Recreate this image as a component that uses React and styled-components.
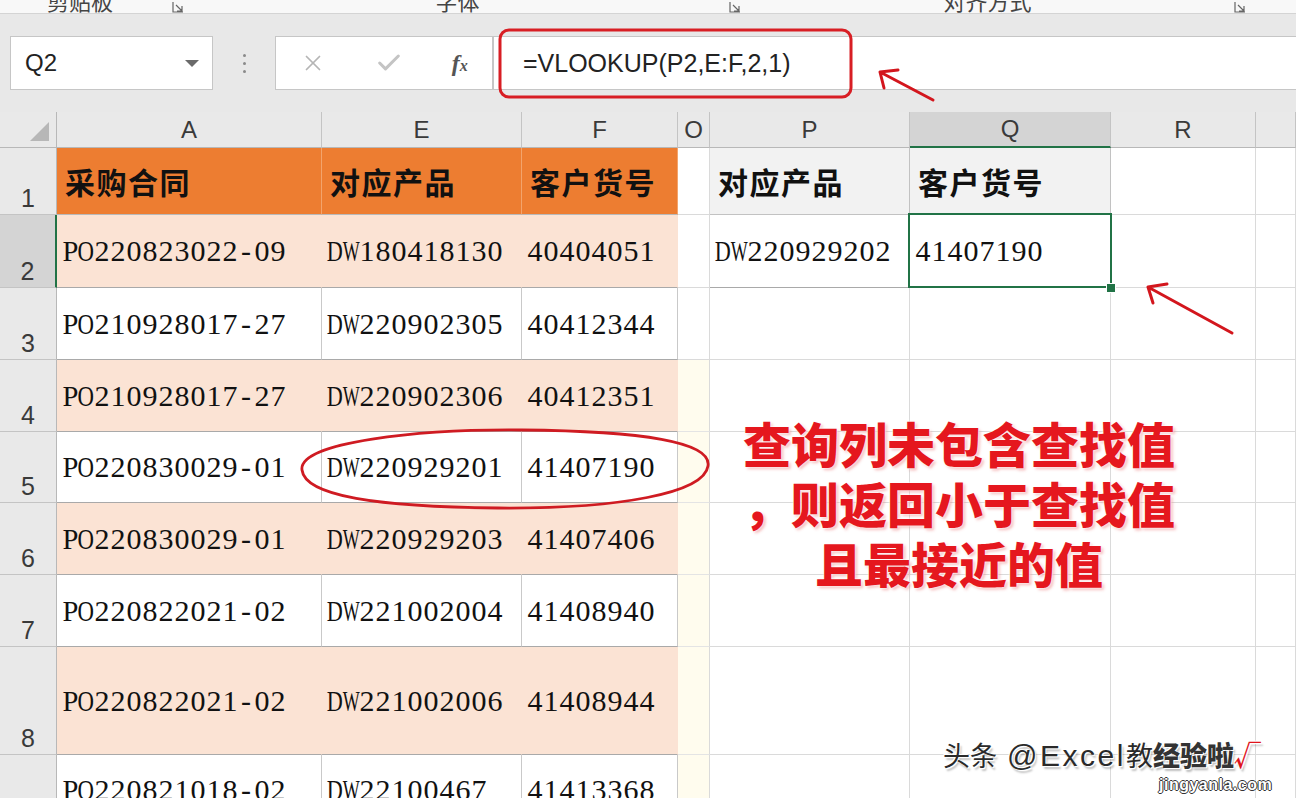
import React from "react";
import styled, { createGlobalStyle } from "styled-components";
import { X, Check } from "lucide-react";

const GlobalStyle = createGlobalStyle`
  html, body { margin: 0; padding: 0; background: #fff; }
  body { font-family: "Liberation Sans", "Noto Sans CJK SC", sans-serif; }
  * { box-sizing: border-box; }
`;

const rows = [
  { n: 2, h: 73, fill: "peach", a: "PO220823022-09", e: "DW180418130", f: "40404051", p: "DW220929202", q: "41407190" },
  { n: 3, h: 72, fill: "white", a: "PO210928017-27", e: "DW220902305", f: "40412344" },
  { n: 4, h: 72, fill: "peach", a: "PO210928017-27", e: "DW220902306", f: "40412351" },
  { n: 5, h: 71, fill: "white", a: "PO220830029-01", e: "DW220929201", f: "41407190" },
  { n: 6, h: 72, fill: "peach", a: "PO220830029-01", e: "DW220929203", f: "41407406" },
  { n: 7, h: 72, fill: "white", a: "PO220822021-02", e: "DW221002004", f: "41408940" },
  { n: 8, h: 108, fill: "peach", a: "PO220822021-02", e: "DW221002006", f: "41408944" },
  { n: 9, h: 70, fill: "white", a: "PO220821018-02", e: "DW22100467", f: "41413368" },
];

const fills = {
  orange: { bg: "#ed7d31", v: "#f3a46c", h: "#b9b9b9" },
  peach: { bg: "#fbe3d4", v: "#fbe3d4", h: "#a9a9a9" },
  white: { bg: "#ffffff", v: "#c9c9c9", h: "#a9a9a9" },
  gray: { bg: "#f2f2f2", v: "#c2c2c2", h: "#c2c2c2" },
  plain: { bg: "#ffffff", v: "#dadada", h: "#dadada" },
  tint: { bg: "#fffcee", v: "#dadada", h: "#e4e4e4" },
};

// wide serif letters squeezed into the half-width cell of the sheet font
const squeeze = { D: 0.74, W: 0.6, O: 0.76, P: 0.95 };

const Value = ({ children }) => (
  <ValueRow>
    {[...children].map((ch, i) => (
      <Glyph key={i} $sx={squeeze[ch]}>
        <span>{ch}</span>
      </Glyph>
    ))}
  </ValueRow>
);

export default function App() {
  return (
    <Page>
      <GlobalStyle />
      <Ribbon>
        <RibbonSlot $w={160}><RibbonLabel>剪贴板</RibbonLabel></RibbonSlot>
        <RibbonSlot $w={35}><Launcher /></RibbonSlot>
        <RibbonSlot $w={525}><RibbonLabel>字体</RibbonLabel></RibbonSlot>
        <RibbonSlot $w={30}><Launcher /></RibbonSlot>
        <RibbonSlot $w={475}><RibbonLabel>对齐方式</RibbonLabel></RibbonSlot>
        <RibbonSlot $w={30}><Launcher /></RibbonSlot>
      </Ribbon>

      <FormulaBar>
        <NameBox>
          <span>Q2</span>
          <DropArrow />
        </NameBox>
        <Grip>
          <i /><i /><i />
        </Grip>
        <FxBox>
          <X size={26} strokeWidth={1.6} color="#b5b5b5" />
          <Check size={28} strokeWidth={2.6} color="#c4c4c4" />
          <FxMark>f<small>x</small></FxMark>
        </FxBox>
        <FormulaInput>=VLOOKUP(P2,E:F,2,1)</FormulaInput>
      </FormulaBar>

      <Sheet>
        <Corner><CornerTri /></Corner>
        <ColHead>A</ColHead>
        <ColHead>E</ColHead>
        <ColHead>F</ColHead>
        <ColHead>O</ColHead>
        <ColHead>P</ColHead>
        <ColHead $sel>Q</ColHead>
        <ColHead>R</ColHead>
        <ColHead />

        <RowHead>1</RowHead>
        <Cell $fill="orange"><HeadText>采购合同</HeadText></Cell>
        <Cell $fill="orange"><HeadText>对应产品</HeadText></Cell>
        <Cell $fill="orange"><HeadText>客户货号</HeadText></Cell>
        <Cell $fill="plain" />
        <Cell $fill="gray"><HeadText>对应产品</HeadText></Cell>
        <Cell $fill="gray"><HeadText>客户货号</HeadText></Cell>
        <Cell $fill="plain" />
        <Cell $fill="plain" />

        {rows.map((r) => (
          <React.Fragment key={r.n}>
            <RowHead $sel={r.n === 2}>{r.n < 9 ? r.n : ""}</RowHead>
            <Cell $fill={r.fill}><Value>{r.a}</Value></Cell>
            <Cell $fill={r.fill}><Value>{r.e}</Value></Cell>
            <Cell $fill={r.fill}><Value>{r.f}</Value></Cell>
            <Cell $fill={r.n >= 4 ? "tint" : "plain"} />
            <Cell $fill={r.n === 2 ? "white" : "plain"}>{r.p && <Value>{r.p}</Value>}</Cell>
            <Cell $fill="plain" $selected={r.n === 2}>
              {r.q && <Value>{r.q}</Value>}
              {r.n === 2 && <FillHandle />}
            </Cell>
            <Cell $fill="plain" />
            <Cell $fill="plain" />
          </React.Fragment>
        ))}
      </Sheet>

      <Marks viewBox="0 0 1296 798" width="1296" height="798">
        <rect x="500" y="30" width="351" height="67" rx="9" fill="none" stroke="#d81e24" strokeWidth="3" />
        <g stroke="#d3161d" strokeWidth="3" strokeLinecap="round" fill="none">
          <path d="M933 100 L880 72 M880 72 L898 70 M880 72 L884 88" />
          <path d="M1232 333 L1148 287 M1148 287 L1167 284 M1148 287 L1153 303" />
        </g>
        <path
          d="M302 470 C 298 442, 420 429, 522 430 C 642 431, 712 442, 708 466 C 704 493, 620 509, 498 508 C 378 507, 305 496, 302 470 Z"
          fill="none"
          stroke="#cf1b22"
          strokeWidth="2.8"
        />
      </Marks>

      <Note>
        查询列未包含查找值
        <br />
        ，则返回小于查找值
        <br />
        且最接近的值
      </Note>

      <Watermark>
        头条 <Handle>@Excel</Handle>教<Brand>经验啦</Brand><Tick>√</Tick>
        <Site>jingyanla.com</Site>
      </Watermark>
    </Page>
  );
}

const Launcher = () => (
  <svg width="12" height="12" viewBox="0 0 12 12">
    <path d="M1 1 V11 H11 M4 4 L10 10 M10 5 V10 H5" stroke="#666" strokeWidth="1.2" fill="none" />
  </svg>
);

const Page = styled.div`
  position: relative;
  width: 1296px;
  height: 798px;
  overflow: hidden;
  display: flex;
  flex-direction: column;
  background: #fff;
`;

const Ribbon = styled.div`
  height: 14px;
  flex: none;
  display: flex;
  align-items: flex-end;
  overflow: hidden;
  background: #f8f8f8;
  border-bottom: 1px solid #d4d4d4;
`;

const RibbonSlot = styled.div`
  width: ${(p) => p.$w}px;
  flex: none;
  display: flex;
  justify-content: center;
  align-items: flex-end;
  height: 14px;
`;

const RibbonLabel = styled.span`
  font-family: "Noto Sans CJK SC", sans-serif;
  font-size: 22px;
  line-height: 24px;
  color: #444;
  margin-bottom: 1px;
  flex: none;
`;

const FormulaBar = styled.div`
  height: 98px;
  flex: none;
  display: flex;
  align-items: center;
  padding-left: 10px;
  background: #e8e8e8;
`;

const NameBox = styled.div`
  width: 203px;
  height: 54px;
  display: flex;
  align-items: center;
  justify-content: space-between;
  padding: 0 13px 0 14px;
  background: #fff;
  border: 1px solid #c6c6c6;
  font-size: 24px;
  color: #222;
`;

const DropArrow = styled.span`
  width: 0;
  height: 0;
  border-left: 7px solid transparent;
  border-right: 7px solid transparent;
  border-top: 7px solid #6a6a6a;
`;

const Grip = styled.div`
  width: 62px;
  display: flex;
  flex-direction: column;
  align-items: center;
  gap: 5px;
  i {
    width: 3px;
    height: 3px;
    border-radius: 50%;
    background: #8a8a8a;
  }
`;

const FxBox = styled.div`
  width: 218px;
  height: 54px;
  display: flex;
  align-items: center;
  justify-content: space-around;
  background: #fff;
  border: 1px solid #c6c6c6;
`;

const FxMark = styled.span`
  font-family: "Liberation Serif", serif;
  font-style: italic;
  font-weight: bold;
  font-size: 24px;
  color: #555;
  small {
    font-size: 16px;
  }
`;

const FormulaInput = styled.div`
  flex: 1;
  height: 54px;
  display: flex;
  align-items: center;
  padding-left: 29px;
  background: #fff;
  border: 1px solid #c6c6c6;
  border-right: none;
  font-size: 25px;
  color: #222;
`;

const Sheet = styled.div`
  flex: none;
  display: grid;
  grid-template-columns: 57px 265px 200px 156px 32px 200px 201px 145px 1fr;
  grid-template-rows: 36px 67px ${rows.map((r) => r.h + "px").join(" ")};
`;

const Corner = styled.div`
  background: #e9e9e9;
  border-right: 1px solid #b8b8b8;
  border-bottom: 1px solid #b8b8b8;
  display: flex;
  align-items: flex-end;
  justify-content: flex-end;
  padding: 0 7px 6px 0;
`;

const CornerTri = styled.div`
  width: 0;
  height: 0;
  border-left: 19px solid transparent;
  border-bottom: 19px solid #b7b7b7;
`;

const ColHead = styled.div`
  background: ${(p) => (p.$sel ? "#d4d4d4" : "#e9e9e9")};
  border-right: 1px solid #c4c4c4;
  border-bottom: ${(p) => (p.$sel ? "2px solid #217346" : "1px solid #b8b8b8")};
  display: flex;
  align-items: center;
  justify-content: center;
  font-size: 24px;
  color: #3a3a3a;
`;

const RowHead = styled.div`
  background: ${(p) => (p.$sel ? "#d4d4d4" : "#e9e9e9")};
  border-right: ${(p) => (p.$sel ? "2px solid #217346" : "1px solid #b8b8b8")};
  border-bottom: 1px solid #c4c4c4;
  display: flex;
  align-items: flex-end;
  justify-content: center;
  padding-bottom: 1px;
  font-size: 25px;
  line-height: 30px;
  color: #3a3a3a;
`;

const Cell = styled.div`
  position: relative;
  z-index: ${(p) => (p.$selected ? 2 : "auto")};
  display: flex;
  align-items: center;
  padding-left: 5px;
  white-space: nowrap;
  background: ${(p) => fills[p.$fill].bg};
  border-right: 1px solid ${(p) => fills[p.$fill].v};
  border-bottom: 1px solid ${(p) => fills[p.$fill].h};
  ${(p) =>
    p.$selected &&
    `&::after {
      content: "";
      position: absolute;
      inset: -2px -2px -1px -2px;
      border: 2.5px solid #217346;
      pointer-events: none;
    }`}
`;

const FillHandle = styled.span`
  position: absolute;
  right: -6px;
  bottom: -6px;
  width: 10px;
  height: 10px;
  background: #217346;
  border: 1px solid #fff;
  z-index: 3;
`;

const HeadText = styled.span`
  font-family: "Noto Sans CJK SC", sans-serif;
  font-weight: 700;
  font-size: 30px;
  letter-spacing: 1.5px;
  color: #111;
  padding-left: 3px;
`;

const ValueRow = styled.span`
  display: flex;
  font-family: "Liberation Serif", serif;
  font-size: 30px;
  line-height: 34px;
  color: #111;
`;

const Glyph = styled.span`
  display: flex;
  justify-content: center;
  width: 16px;
  span {
    display: inline-block;
    transform: ${(p) => (p.$sx ? `scaleX(${p.$sx})` : "none")};
  }
`;

const Marks = styled.svg`
  position: absolute;
  left: 0;
  top: 0;
  pointer-events: none;
`;

const Note = styled.div`
  position: absolute;
  left: 727px;
  top: 412px;
  width: 464px;
  text-align: center;
  font-family: "Noto Sans CJK SC", sans-serif;
  font-weight: 900;
  font-size: 48px;
  line-height: 60px;
  color: #e5171e;
  text-shadow: 0 0 2px #fff, 0 0 3px #fff, 2px 2px 3px rgba(230, 90, 90, 0.45);
`;

const Watermark = styled.div`
  position: absolute;
  left: 943px;
  top: 738px;
  font-family: "Noto Sans CJK SC", sans-serif;
  font-size: 27px;
  line-height: 34px;
  color: #2a2a2a;
  white-space: nowrap;
  text-shadow: 1px 1px 0 #fff, -1px -1px 0 #fff, 2px 3px 2px rgba(0, 0, 0, 0.25);
`;

const Handle = styled.span`
  font-family: "Liberation Sans", sans-serif;
  font-size: 30px;
  letter-spacing: 2.5px;
  margin-left: 4px;
`;

const Brand = styled.span`
  font-weight: 900;
  color: #333;
`;

const Tick = styled.span`
  color: #e0141c;
  font-weight: 900;
`;

const Site = styled.div`
  position: absolute;
  left: 216px;
  top: 38px;
  font-family: "Liberation Sans", sans-serif;
  font-weight: bold;
  font-size: 16px;
  line-height: 18px;
  letter-spacing: 0.5px;
  color: #fff;
  text-shadow: 1px 0 0 #333, -1px 0 0 #333, 0 1px 0 #333, 0 -1px 0 #333;
`;
